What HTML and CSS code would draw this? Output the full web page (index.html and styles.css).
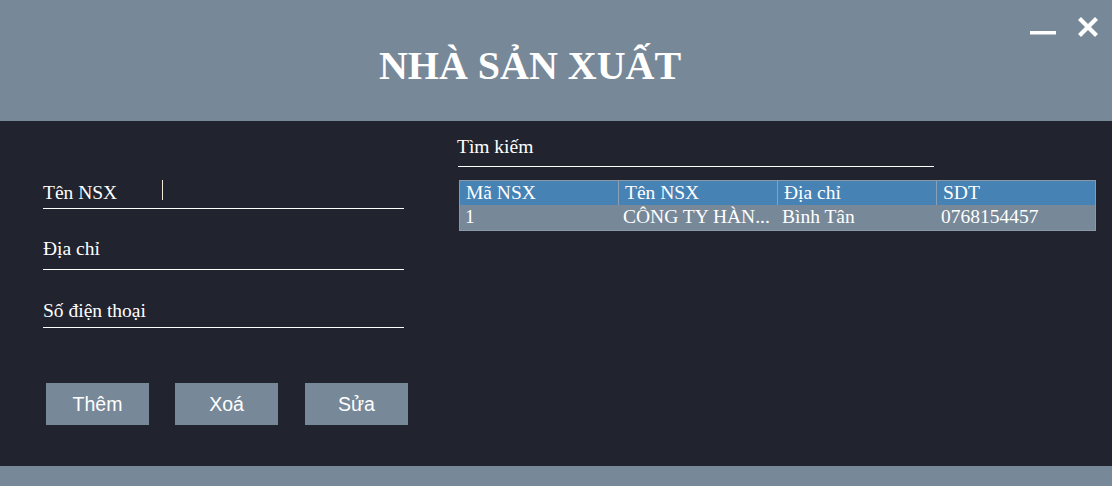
FILE: index.html
```html
<!DOCTYPE html>
<html lang="vi">
<head>
<meta charset="utf-8">
<title>Nhà sản xuất</title>
<link rel="stylesheet" href="styles.css">
</head>
<body>
<div class="window">
  <header class="header">
    <h1 class="title">NHÀ SẢN XUẤT</h1>
    <div class="controls">
      <svg class="ctl-min" width="26" height="6" viewBox="0 0 26 6"><rect x="0" y="1" width="26" height="3.5" fill="#fff"/></svg>
      <svg class="ctl-close" width="22" height="20" viewBox="0 0 22 20"><path d="M2.5 1.5 L19.5 18.5 M19.5 1.5 L2.5 18.5" stroke="#fff" stroke-width="4.2" stroke-linecap="butt"/></svg>
    </div>
  </header>
  <main class="main">
    <section class="form">
      <div class="field f1"><span class="label">Tên NSX</span><span class="cursor"></span></div>
      <div class="field f2"><span class="label">Địa chỉ</span></div>
      <div class="field f3"><span class="label">Số điện thoại</span></div>
      <div class="buttons">
        <button class="btn">Thêm</button>
        <button class="btn">Xoá</button>
        <button class="btn">Sửa</button>
      </div>
    </section>
    <section class="list">
      <div class="search"><span class="label">Tìm kiếm</span></div>
      <div class="table">
        <div class="row head">
          <div class="cell">Mã NSX</div>
          <div class="cell">Tên NSX</div>
          <div class="cell">Địa chỉ</div>
          <div class="cell">SDT</div>
        </div>
        <div class="row data">
          <div class="cell">1</div>
          <div class="cell">CÔNG TY HÀN...</div>
          <div class="cell">Bình Tân</div>
          <div class="cell">0768154457</div>
        </div>
      </div>
    </section>
  </main>
  <footer class="footer"></footer>
</div>
</body>
</html>
```

FILE: styles.css
```css
* { box-sizing: border-box; }
html, body { margin: 0; padding: 0; }
body {
  width: 1112px;
  height: 486px;
  overflow: hidden;
  font-family: "Liberation Serif", "Times New Roman", serif;
  color: #fff;
  background: #21232f;
}
.window {
  display: flex;
  flex-direction: column;
  width: 1112px;
  height: 486px;
}
.header {
  position: relative;
  height: 121px;
  background: #778899;
  display: flex;
  justify-content: center;
  padding-right: 52px;
}
.title {
  margin: 45px 0 0;
  font-size: 40px;
  line-height: 42px;
  font-weight: bold;
  color: #fff;
  letter-spacing: 0;
}
.controls {
  position: absolute;
  top: 0;
  right: 0;
}
.ctl-min {
  position: absolute;
  left: -82px;
  top: 30px;
}
.ctl-close {
  position: absolute;
  left: -35px;
  top: 17px;
}
.main {
  height: 345px;
  background: #21232f;
  display: flex;
}
.form {
  width: 415px;
  padding: 61px 0 0 43px;
}
.field {
  width: 361px;
  border-bottom: 1px solid #fff;
  display: flex;
  align-items: flex-start;
  position: relative;
}
.label {
  font-size: 19.5px;
  line-height: 22px;
  white-space: nowrap;
}
.f1 { padding-bottom: 4px; }
.f2 { margin-top: 29px; padding-bottom: 9px; }
.f3 { margin-top: 30px; padding-bottom: 5px; }
.cursor {
  position: absolute;
  left: 119px;
  top: -2px;
  width: 1px;
  height: 20px;
  background: #f3ead8;
}
.buttons {
  display: flex;
  gap: 26px;
  margin-top: 55px;
  padding-left: 3px;
}
.btn {
  width: 103px;
  height: 42px;
  border: 0;
  padding: 0;
  margin: 0;
  background: #778899;
  color: #fff;
  font-family: "Liberation Sans", Arial, sans-serif;
  font-size: 19.5px;
}
.btn + .btn + .btn { margin-left: 1px; }
.list {
  padding: 15px 0 0 43px;
  width: 680px;
}
.search {
  width: 476px;
  padding-bottom: 8px;
  border-bottom: 1px solid #fff;
  margin-left: 0;
}
.search .label { margin-left: -1px; }
.table {
  margin-top: 13px;
  margin-left: 1px;
  width: 637px;
  border: 1px solid #8a98a8;
  background: #778899;
}
.row {
  display: grid;
  grid-template-columns: 158px 159px 159px 159px;
}
.cell {
  font-size: 19.5px;
  white-space: nowrap;
  overflow: hidden;
}
.head {
  background: #4682b4;
  height: 24px;
  line-height: 24px;
}
.head .cell {
  padding-left: 6px;
  border-left: 1px solid #8aa0b8;
}
.head .cell:first-child { border-left: 0; }
.data {
  height: 25px;
  line-height: 24px;
}
.data .cell { padding-left: 5px; }
.footer {
  height: 20px;
  background: #778899;
}
```
